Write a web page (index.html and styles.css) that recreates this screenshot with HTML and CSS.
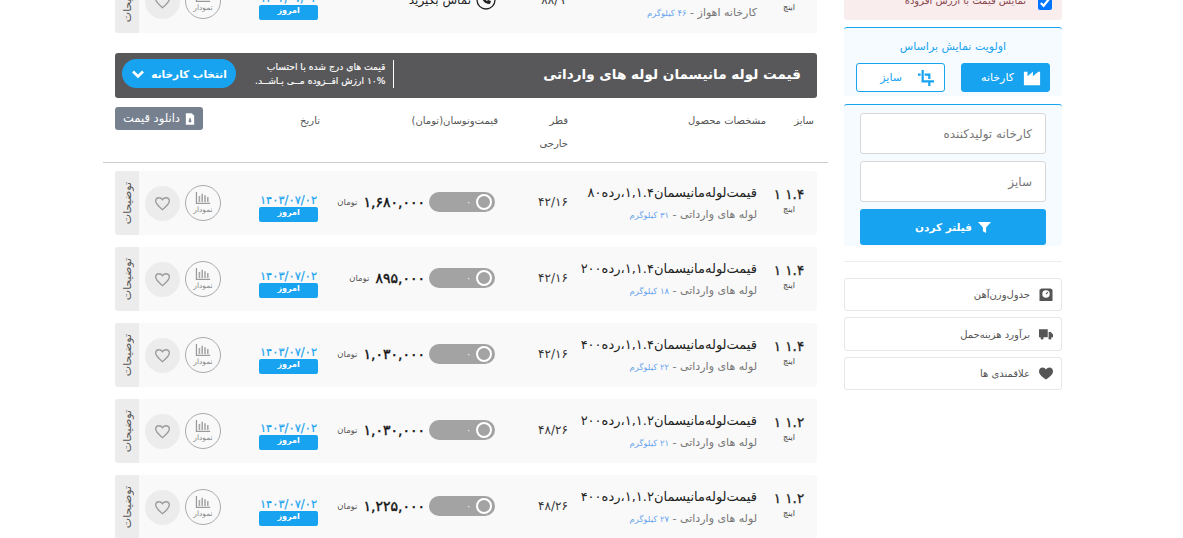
FILE: index.html
```html
<!DOCTYPE html>
<html lang="fa" dir="rtl">
<head>
<meta charset="utf-8">
<title>قیمت لوله مانیسمان</title>
<link rel="stylesheet" href="styles.css">
</head>
<body>
<svg class="defs" width="0" height="0" aria-hidden="true">
  <symbol id="i-chart" viewBox="0 0 20 16"><path d="M1 0v15h18v-1.600H2.600V0z" fill="#9a9a9a"/><path d="M4.500 5h2v7.500h-2zM8 2h2v10.500H8zM11.500 4h2v8.500h-2zM15 6h2v6.500h-2z" fill="#a8a8a8"/></symbol>
  <symbol id="i-heart" viewBox="0 0 24 22"><path d="M12 20C6 15 2 12 2 7.500 2 4.500 4.300 2.500 7 2.500c2 0 3.800 1 5 3 1.200-2 3-3 5-3 2.700 0 5 2 5 5 0 4.500-4 7.500-10 12.500z" fill="none" stroke="#9c9c9c" stroke-width="2"/></symbol>
</svg>
<div class="page">
  <main class="main">
    <article class="row row-first">
      <div class="c-size"><b class="num">&nbsp;</b><small>اینچ</small></div>
      <div class="c-spec"><h3>&nbsp;</h3><p>کارخانه اهواز - <span>۴۶ کیلوگرم</span></p></div>
      <div class="c-dia">۸۸/۹</div>
      <div class="c-price c-call"><svg class="phone" viewBox="0 0 20 20"><circle cx="10" cy="10" r="9" fill="none" stroke="#222" stroke-width="1.300"/><path d="M6 6c0 5 3 8 8 8l1-3-3-1-1 1c-1-.5-2-1.500-2.500-2.500l1-1-1-3z" fill="#222"/></svg><span>تماس بگیرید</span></div>
      <div class="c-date"><span class="date">۱۴۰۳/۰۷/۰۲</span><span class="today">امروز</span></div>
      <div class="c-act"><span class="chart"><svg><use href="#i-chart"/></svg><em>نمودار</em></span><span class="fav"><svg><use href="#i-heart"/></svg></span></div>
      <div class="c-tab"><span>توضیحات</span></div>
    </article>

    <section class="banner">
      <h2>قیمت لوله مانیسمان لوله های وارداتی</h2>
      <div class="note">قیمت های درج شده با احتساب<br>۱۰% ارزش افــزوده مــی بـاشــد.</div>
      <button class="pick" type="button">انتخاب کارخانه <svg viewBox="0 0 14 10"><path d="M2 2.500l5 5 5-5" fill="none" stroke="#fff" stroke-width="2.600"/></svg></button>
    </section>

    <div class="thead">
      <div class="h-size">سایز</div>
      <div class="h-spec">مشخصات محصول</div>
      <div class="h-dia">قطر<br>خارجی</div>
      <div class="h-price">قیمت‌ونوسان(تومان)</div>
      <div class="h-date">تاریخ</div>
      <a class="dl"><svg viewBox="0 0 12 14"><path d="M1 0h7l3 3v11H1z" fill="#fff"/><path d="M5 6h2v3h1.500L6 11.500 3.500 9H5z" fill="#76808f"/></svg>دانلود قیمت</a>
    </div>

    <article class="row">
      <div class="c-size"><b class="num">۱ ۱.۴</b><small>اینچ</small></div>
      <div class="c-spec"><h3>قیمت‌لوله‌مانیسمان۱,۱.۴،رده۸۰</h3><p>لوله های وارداتی - <span>۳۱ کیلوگرم</span></p></div>
      <div class="c-dia">۴۲/۱۶</div>
      <div class="c-price"><span class="toggle"><i></i><u>۰</u></span><b>۱,۶۸۰,۰۰۰</b><small>تومان</small></div>
      <div class="c-date"><span class="date">۱۴۰۳/۰۷/۰۲</span><span class="today">امروز</span></div>
      <div class="c-act"><span class="chart"><svg><use href="#i-chart"/></svg><em>نمودار</em></span><span class="fav"><svg><use href="#i-heart"/></svg></span></div>
      <div class="c-tab"><span>توضیحات</span></div>
    </article>
    <article class="row">
      <div class="c-size"><b class="num">۱ ۱.۴</b><small>اینچ</small></div>
      <div class="c-spec"><h3>قیمت‌لوله‌مانیسمان۱,۱.۴،رده۲۰۰</h3><p>لوله های وارداتی - <span>۱۸ کیلوگرم</span></p></div>
      <div class="c-dia">۴۲/۱۶</div>
      <div class="c-price"><span class="toggle"><i></i><u>۰</u></span><b>۸۹۵,۰۰۰</b><small>تومان</small></div>
      <div class="c-date"><span class="date">۱۴۰۳/۰۷/۰۲</span><span class="today">امروز</span></div>
      <div class="c-act"><span class="chart"><svg><use href="#i-chart"/></svg><em>نمودار</em></span><span class="fav"><svg><use href="#i-heart"/></svg></span></div>
      <div class="c-tab"><span>توضیحات</span></div>
    </article>
    <article class="row">
      <div class="c-size"><b class="num">۱ ۱.۴</b><small>اینچ</small></div>
      <div class="c-spec"><h3>قیمت‌لوله‌مانیسمان۱,۱.۴،رده۴۰۰</h3><p>لوله های وارداتی - <span>۲۲ کیلوگرم</span></p></div>
      <div class="c-dia">۴۲/۱۶</div>
      <div class="c-price"><span class="toggle"><i></i><u>۰</u></span><b>۱,۰۳۰,۰۰۰</b><small>تومان</small></div>
      <div class="c-date"><span class="date">۱۴۰۳/۰۷/۰۲</span><span class="today">امروز</span></div>
      <div class="c-act"><span class="chart"><svg><use href="#i-chart"/></svg><em>نمودار</em></span><span class="fav"><svg><use href="#i-heart"/></svg></span></div>
      <div class="c-tab"><span>توضیحات</span></div>
    </article>
    <article class="row">
      <div class="c-size"><b class="num">۱ ۱.۲</b><small>اینچ</small></div>
      <div class="c-spec"><h3>قیمت‌لوله‌مانیسمان۱,۱.۲،رده۲۰۰</h3><p>لوله های وارداتی - <span>۲۱ کیلوگرم</span></p></div>
      <div class="c-dia">۴۸/۲۶</div>
      <div class="c-price"><span class="toggle"><i></i><u>۰</u></span><b>۱,۰۳۰,۰۰۰</b><small>تومان</small></div>
      <div class="c-date"><span class="date">۱۴۰۳/۰۷/۰۲</span><span class="today">امروز</span></div>
      <div class="c-act"><span class="chart"><svg><use href="#i-chart"/></svg><em>نمودار</em></span><span class="fav"><svg><use href="#i-heart"/></svg></span></div>
      <div class="c-tab"><span>توضیحات</span></div>
    </article>
    <article class="row">
      <div class="c-size"><b class="num">۱ ۱.۲</b><small>اینچ</small></div>
      <div class="c-spec"><h3>قیمت‌لوله‌مانیسمان۱,۱.۲،رده۴۰۰</h3><p>لوله های وارداتی - <span>۲۷ کیلوگرم</span></p></div>
      <div class="c-dia">۴۸/۲۶</div>
      <div class="c-price"><span class="toggle"><i></i><u>۰</u></span><b>۱,۲۲۵,۰۰۰</b><small>تومان</small></div>
      <div class="c-date"><span class="date">۱۴۰۳/۰۷/۰۲</span><span class="today">امروز</span></div>
      <div class="c-act"><span class="chart"><svg><use href="#i-chart"/></svg><em>نمودار</em></span><span class="fav"><svg><use href="#i-heart"/></svg></span></div>
      <div class="c-tab"><span>توضیحات</span></div>
    </article>
  </main>

  <aside class="side">
    <div class="vat"><input type="checkbox" checked><label>نمایش قیمت با ارزش افزوده</label></div>
    <div class="box prio">
      <h4>اولویت نمایش براساس</h4>
      <div class="prio-btns">
        <button class="btn on" type="button"><svg viewBox="0 0 20 16"><path d="M1 1h4v5l6-5v5l6-5h2v15H1z" fill="#fff"/></svg>کارخانه</button>
        <button class="btn" type="button"><svg viewBox="0 0 18 18"><path d="M4 0h2.500v11.500H18V14h-4v4h-2.500v-4H4zM0 4h3v2.500H0zM7.500 4H14v6h-2.500V6.500h-4z" fill="#18a3f0"/></svg>سایز</button>
      </div>
    </div>
    <div class="box filter">
      <div class="field">کارخانه تولیدکننده</div>
      <div class="field">سایز</div>
      <button class="go" type="button"><svg viewBox="0 0 14 14"><path d="M0 1h14L8.700 7v6L5.300 11V7z" fill="#fff"/></svg>فیلتر کردن</button>
    </div>
    <hr class="sep">
    <a class="link"><svg viewBox="0 0 14 14"><path d="M0 2l2-1.500h10L14 2v12H0z" fill="#555"/><circle cx="7" cy="6.500" r="4" fill="#fff"/><path d="M7 6.500l2-2" stroke="#555" stroke-width="1.200"/></svg>جدول‌وزن‌آهن</a>
    <a class="link"><svg viewBox="0 0 16 12"><path d="M0 0h10v9H0zM11 3h2.500L16 6v3h-5z" fill="#555"/><circle cx="3.500" cy="10" r="1.800" fill="#555"/><circle cx="12.500" cy="10" r="1.800" fill="#555"/></svg>برآورد هزینه‌حمل</a>
    <a class="link"><svg viewBox="0 0 14 12"><path d="M7 12C3 9 0 7 0 3.700 0 1.500 1.700 0 3.600 0 5 0 6.200.7 7 2c.8-1.300 2-2 3.400-2C12.300 0 14 1.500 14 3.700 14 7 11 9 7 12z" fill="#555"/></svg>علاقمندی ها</a>
  </aside>
</div>
</body>
</html>
```
FILE: styles.css
```css
* { box-sizing: border-box; }
html, body { margin: 0; height: 538px; overflow: hidden; background: #fff; }
body { font-family: "DejaVu Sans", "Noto Sans", sans-serif; color: #222; font-size: 12px; }
.defs { position: absolute; }
.page { display: flex; flex-direction: row-reverse; gap: 16px; width: 1183px; padding: 0 121px 0 103px; }

.main { width: 725px; flex: none; padding: 0 11px 0 12px; margin-top: -31px; }
.row { display: flex; align-items: center; height: 64px; background: #f9f9f9; border-radius: 3px; margin-bottom: 12px; overflow: hidden; }
.row-first { margin-bottom: 20px; }
.c-size { width: 56px; flex: none; text-align: center; margin-top: -8px; }
.c-size .num { display: block; direction: ltr; font-size: 13.500px; font-weight: 400; color: #222; -webkit-text-stroke: .3px #222; line-height: 20px; }
.c-size small { display: block; font-size: 8px; color: #444; line-height: 11px; }
.c-spec { width: 170px; flex: none; padding-right: 4px; white-space: nowrap; }
.c-spec h3 { margin: 0 0 7px; font-size: 13px; font-weight: 400; color: #222; line-height: 16px; }
.c-spec p { margin: 0; font-size: 11px; color: #777; line-height: 14px; }
.c-spec p span { font-size: 8.500px; color: #6aa5ee; }
.c-dia { width: 76px; flex: none; text-align: center; font-size: 12px; color: #333; margin-top: -3px; }
.c-price { width: 190px; flex: none; display: flex; align-items: center; gap: 8px; padding-right: 20px; white-space: nowrap; margin-top: -3px; }
.c-price b { font-size: 14px; font-weight: 400; color: #111; -webkit-text-stroke: .4px #111; margin-right: -4px; }
.c-price small { font-size: 8.500px; color: #555; margin-right: -2px; }
.c-call { padding-right: 19px; gap: 5px; font-size: 12px; color: #222; margin-top: -2px; }
.phone { width: 20px; height: 20px; flex: none; }
.toggle { width: 66px; height: 20px; flex: none; background: #a3a3a3; border-radius: 10px; display: flex; align-items: center; padding-right: 3px; gap: 5px; }
.toggle i { width: 16px; height: 16px; border-radius: 50%; border: 2px solid #fff; }
.toggle u { text-decoration: none; color: #fff; font-size: 9px; }
.c-date { width: 59px; flex: none; display: flex; flex-direction: column; align-items: stretch; margin-right: 7px; margin-top: 9px; text-align: center; }
.date { font-size: 11.500px; line-height: 14px; color: #18a3f0; -webkit-text-stroke: .2px #18a3f0; }
.today { height: 15px; background: #18a3f0; color: #fff; font-size: 8px; font-weight: 700; line-height: 12px; border-radius: 2px; }
.c-act { flex: 1; display: flex; align-items: center; gap: 5px; padding-right: 38px; }
.chart { width: 36px; height: 36px; flex: none; border: 1px solid #aaa; border-radius: 50%; display: flex; flex-direction: column; align-items: center; justify-content: center; }
.chart svg { width: 16px; height: 13px; }
.chart em { font-style: normal; font-size: 7.500px; color: #888; line-height: 10px; }
.fav { width: 35px; height: 35px; flex: none; background: #ececec; border-radius: 50%; display: flex; align-items: center; justify-content: center; }
.fav svg { width: 17px; height: 15px; }
.c-tab { width: 24px; height: 100%; flex: none; background: #ececec; display: flex; align-items: center; justify-content: center; }
.c-tab span { writing-mode: vertical-rl; transform: rotate(180deg); font-size: 11px; color: #555; white-space: nowrap; }

.banner { display: flex; align-items: center; height: 45px; background: #58585a; border-radius: 3px; color: #fff; padding: 0 16px 4px 7px; }
.banner h2 { margin: 0; font-size: 13.600px; font-weight: 700; flex: 1; white-space: nowrap; }
.note { font-size: 9.200px; line-height: 14px; border-right: 1px solid #fff; padding-right: 7px; margin-left: 19px; white-space: nowrap; -webkit-text-stroke: .15px #fff; }
.pick { display: flex; align-items: center; justify-content: center; gap: 6px; width: 114px; height: 29px; background: #18a3f0; border: 0; border-radius: 15px; color: #fff; font: 700 10.500px "DejaVu Sans", sans-serif; white-space: nowrap; }
.pick svg { width: 14px; height: 10px; }

.thead { display: flex; align-items: flex-start; height: 65px; margin: 0 -11px 8px -12px; padding: 9px 11px 0 12px; border-bottom: 1px solid #ccc; font-size: 10px; color: #555; line-height: 23px; }
.h-size { width: 51px; flex: none; padding: 2px 3px 0 0; }
.h-spec { width: 198px; flex: none; padding-top: 2px; }
.h-dia { width: 60px; flex: none; padding-top: 2px; }
.h-price { width: 110px; flex: none; padding: 2px 10px 0 0; white-space: nowrap; }
.h-date { width: 101px; flex: none; padding: 2px 78px 0 0; white-space: nowrap; }
.dl { display: flex; align-items: center; justify-content: center; gap: 5px; width: 88px; height: 23px; margin-right: auto; background: #76808f; border-radius: 3px; color: #fff; font-size: 11.500px; white-space: nowrap; line-height: 1; }
.dl svg { width: 10px; height: 12px; flex: none; }

.side { width: 218px; flex: none; }
.vat { display: flex; align-items: center; gap: 12px; height: 20px; padding: 0 10px 9px 0; background: #f9edee; border-radius: 0 0 3px 3px; font-size: 10px; color: #8a4a50; overflow: hidden; }
.vat input { width: 14px; height: 14px; margin: -6px 0 0; flex: none; }
.vat label { margin-top: -10px; white-space: nowrap; }
.box { background: #f5fbff; border-top: 1px solid #18a3f0; border-radius: 3px; }
.prio { height: 69px; margin-top: 7px; padding: 12px 12px 0; }
.prio h4 { margin: 0 0 10px; text-align: center; font-size: 11px; font-weight: 400; color: #18a3f0; line-height: 13px; }
.prio-btns { display: flex; justify-content: space-between; }
.btn { display: flex; align-items: center; gap: 15px; justify-content: flex-start; padding: 0 9px; width: 89px; height: 29px; border: 1px solid #18a3f0; border-radius: 3px; background: #fff; color: #18a3f0; font: 11px "DejaVu Sans", sans-serif; }
.btn svg { width: 18px; height: 16px; flex: none; }
.btn.on { background: #18a3f0; color: #fff; gap: 9px; padding: 0 8px; }
.filter { height: 142px; margin-top: 8px; padding: 8px 16px 0; display: flex; flex-direction: column; gap: 7px; }
.field { height: 41px; background: #fff; border: 1px solid #d8d8d8; border-radius: 3px; display: flex; align-items: center; padding: 0 13px; color: #777; font-size: 12px; white-space: nowrap; }
.go { display: flex; align-items: center; justify-content: center; gap: 6px; height: 36px; border: 0; border-radius: 3px; background: #18a3f0; color: #fff; font: 700 10.500px "DejaVu Sans", sans-serif; }
.go svg { width: 13px; height: 13px; }
.sep { border: 0; border-top: 1px solid #eee; margin: 15px 0 16px; }
.link { display: flex; align-items: center; gap: 9px; height: 33.400px; margin-bottom: 6px; padding: 0 8px; background: #fff; border: 1px solid #e6e6e6; border-radius: 3px; font-size: 10px; color: #555; white-space: nowrap; }
.link svg { width: 14px; height: 13px; flex: none; }
```
